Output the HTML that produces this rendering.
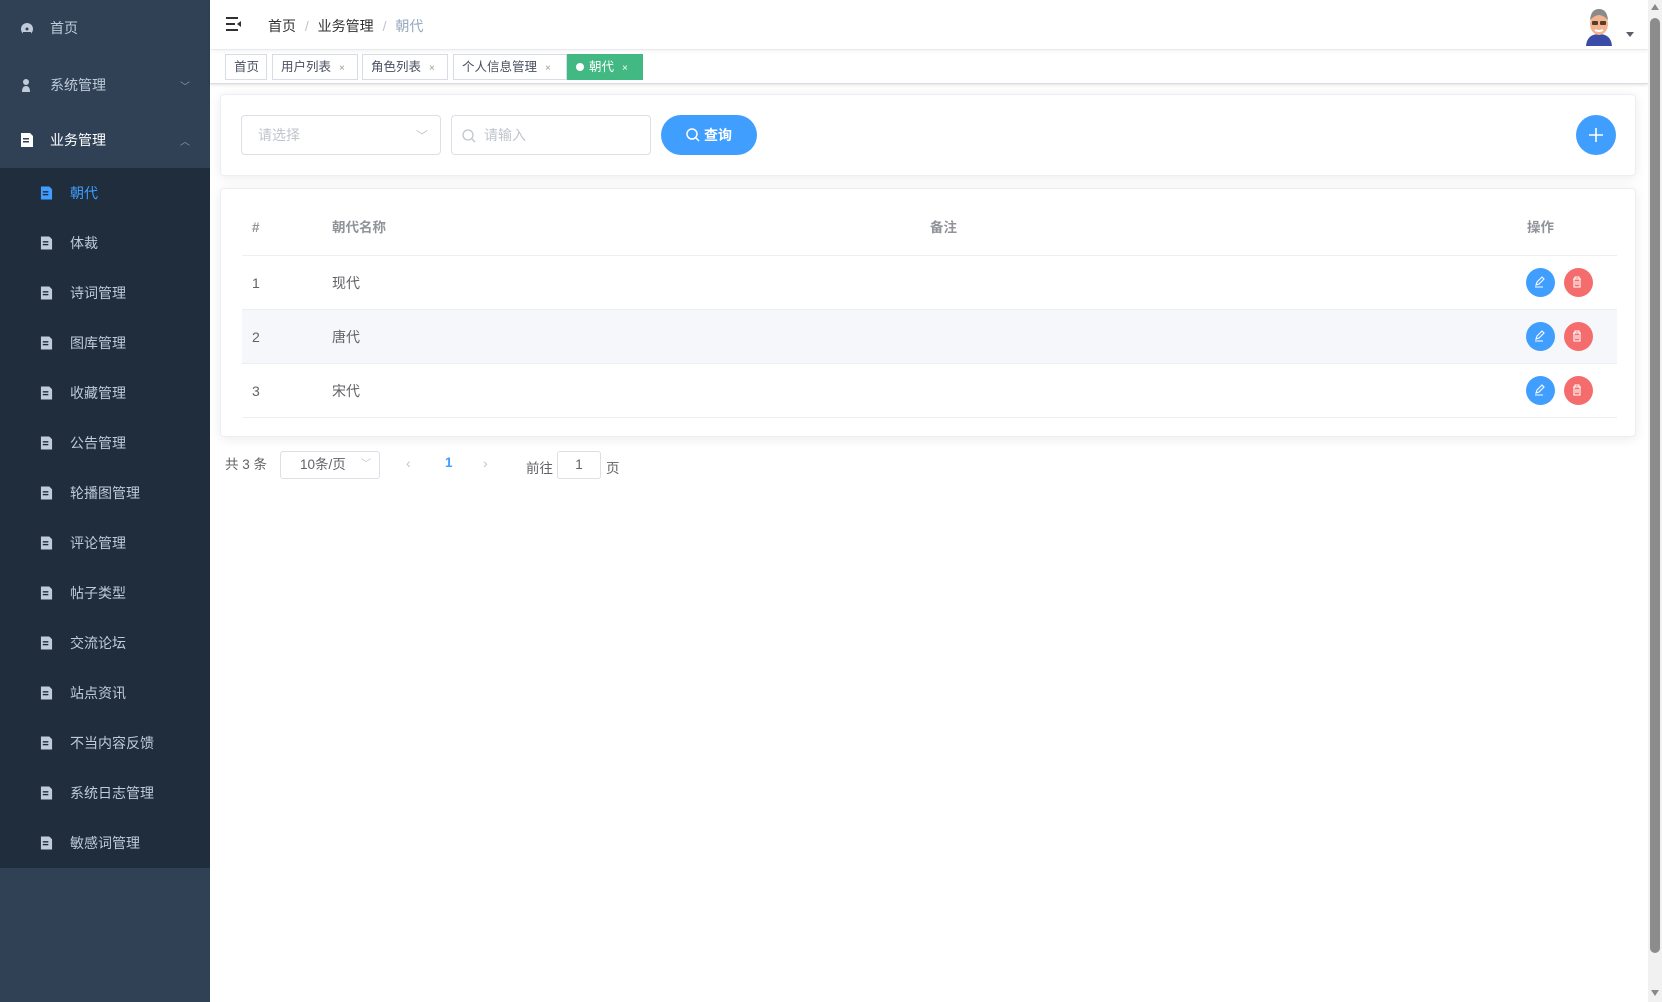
<!DOCTYPE html>
<html><head><meta charset="utf-8"><style>
*{box-sizing:border-box;margin:0;padding:0}
body{width:1662px;height:1002px;overflow:hidden;background:#fff;font-family:"Liberation Sans","Noto Sans CJK SC",sans-serif;position:relative;color:#606266}
.side{position:absolute;left:0;top:0;width:210px;height:1002px;background:#304156}
.mi{position:absolute;left:0;width:210px;height:56px;display:flex;align-items:center;color:#bfcbd9;font-size:14px}
.mi .ic{position:absolute;left:20px;width:14px;height:14px}
.mi span{position:absolute;left:50px}
.mi .ar{position:absolute;right:20px;font-size:10px;color:#909399;font-weight:normal}
.sub{position:absolute;left:0;top:168px;width:210px;height:700px;background:#1f2d3d}
.si{height:50px;display:flex;align-items:center;color:#bfcbd9;font-size:14px;position:relative}
.si .ic{position:absolute;left:40px;width:13px;height:14px}
.si span{position:absolute;left:70px}
.hdr{position:absolute;left:210px;top:0;right:14px;height:50px;border-bottom:1px solid #eef0f3;box-shadow:0 1px 4px rgba(0,21,41,.06)}
.tags{position:absolute;left:210px;top:50px;right:14px;height:34px;border-bottom:1px solid #d8dce5;box-shadow:0 1px 3px rgba(0,0,0,.12)}
.tag{position:absolute;top:4px;height:26px;border:1px solid #d8dce5;font-size:12.5px;color:#495060;line-height:24px;padding-left:8px;background:#fff}
.tag i{font-style:normal;font-size:10px;color:#999;margin-left:8px}
.card{position:absolute;left:220px;width:1416px;background:#fff;border:1px solid #ebeef5;border-radius:4px;box-shadow:0 2px 12px rgba(0,0,0,.08)}
.inp{position:absolute;height:40px;border:1px solid #dcdfe6;border-radius:4px;font-size:14px;color:#c0c4cc;line-height:38px}
.row{position:absolute;left:21px;width:1375px;height:54px;border-bottom:1px solid #ebeef5;font-size:14px;color:#606266}
.row div{position:absolute;top:0;line-height:54px}
.cb{position:absolute;top:12px;width:29px;height:29px;border-radius:50%}
</style></head><body>
<div class="side">
 <div class="mi" style="top:0"><svg class="ic" viewBox="0 0 14 14"><circle cx="7" cy="8" r="6" fill="#bfcbd9"/><rect x="3" y="11" width="8" height="3" fill="#304156"/><circle cx="7" cy="8" r="1.5" fill="#304156"/></svg><span>首页</span></div>
 <div class="mi" style="top:57px"><svg class="ic" viewBox="0 0 14 14"><circle cx="6" cy="4" r="3" fill="#bfcbd9"/><path d="M2 14 Q2 8 6 8 Q10 8 10 14Z" fill="#bfcbd9"/></svg><span>系统管理</span><b class="ar">﹀</b></div>
 <div class="mi" style="top:112px;color:#fff"><svg class="ic" viewBox="0 0 14 14"><path d="M1 0h9l3 3v11H1z" fill="#fff"/><rect x="3" y="5" width="6" height="1.5" fill="#304156"/><rect x="3" y="8" width="6" height="1.5" fill="#304156"/></svg><span>业务管理</span><b class="ar">︿</b></div>
 <div class="sub">
  <div class="si" style="color:#409eff"><svg class="ic" viewBox="0 0 14 14"><path d="M1 0h9l3 3v11H1z" fill="#409eff"/><rect x="3" y="5" width="6" height="1.5" fill="#1f2d3d"/><rect x="3" y="8" width="6" height="1.5" fill="#1f2d3d"/></svg><span>朝代</span></div>
  <div class="si"><svg class="ic" viewBox="0 0 14 14"><path d="M1 0h9l3 3v11H1z" fill="#bfcbd9"/><rect x="3" y="5" width="6" height="1.5" fill="#1f2d3d"/><rect x="3" y="8" width="6" height="1.5" fill="#1f2d3d"/></svg><span>体裁</span></div>
  <div class="si"><svg class="ic" viewBox="0 0 14 14"><path d="M1 0h9l3 3v11H1z" fill="#bfcbd9"/><rect x="3" y="5" width="6" height="1.5" fill="#1f2d3d"/><rect x="3" y="8" width="6" height="1.5" fill="#1f2d3d"/></svg><span>诗词管理</span></div>
  <div class="si"><svg class="ic" viewBox="0 0 14 14"><path d="M1 0h9l3 3v11H1z" fill="#bfcbd9"/><rect x="3" y="5" width="6" height="1.5" fill="#1f2d3d"/><rect x="3" y="8" width="6" height="1.5" fill="#1f2d3d"/></svg><span>图库管理</span></div>
  <div class="si"><svg class="ic" viewBox="0 0 14 14"><path d="M1 0h9l3 3v11H1z" fill="#bfcbd9"/><rect x="3" y="5" width="6" height="1.5" fill="#1f2d3d"/><rect x="3" y="8" width="6" height="1.5" fill="#1f2d3d"/></svg><span>收藏管理</span></div>
  <div class="si"><svg class="ic" viewBox="0 0 14 14"><path d="M1 0h9l3 3v11H1z" fill="#bfcbd9"/><rect x="3" y="5" width="6" height="1.5" fill="#1f2d3d"/><rect x="3" y="8" width="6" height="1.5" fill="#1f2d3d"/></svg><span>公告管理</span></div>
  <div class="si"><svg class="ic" viewBox="0 0 14 14"><path d="M1 0h9l3 3v11H1z" fill="#bfcbd9"/><rect x="3" y="5" width="6" height="1.5" fill="#1f2d3d"/><rect x="3" y="8" width="6" height="1.5" fill="#1f2d3d"/></svg><span>轮播图管理</span></div>
  <div class="si"><svg class="ic" viewBox="0 0 14 14"><path d="M1 0h9l3 3v11H1z" fill="#bfcbd9"/><rect x="3" y="5" width="6" height="1.5" fill="#1f2d3d"/><rect x="3" y="8" width="6" height="1.5" fill="#1f2d3d"/></svg><span>评论管理</span></div>
  <div class="si"><svg class="ic" viewBox="0 0 14 14"><path d="M1 0h9l3 3v11H1z" fill="#bfcbd9"/><rect x="3" y="5" width="6" height="1.5" fill="#1f2d3d"/><rect x="3" y="8" width="6" height="1.5" fill="#1f2d3d"/></svg><span>帖子类型</span></div>
  <div class="si"><svg class="ic" viewBox="0 0 14 14"><path d="M1 0h9l3 3v11H1z" fill="#bfcbd9"/><rect x="3" y="5" width="6" height="1.5" fill="#1f2d3d"/><rect x="3" y="8" width="6" height="1.5" fill="#1f2d3d"/></svg><span>交流论坛</span></div>
  <div class="si"><svg class="ic" viewBox="0 0 14 14"><path d="M1 0h9l3 3v11H1z" fill="#bfcbd9"/><rect x="3" y="5" width="6" height="1.5" fill="#1f2d3d"/><rect x="3" y="8" width="6" height="1.5" fill="#1f2d3d"/></svg><span>站点资讯</span></div>
  <div class="si"><svg class="ic" viewBox="0 0 14 14"><path d="M1 0h9l3 3v11H1z" fill="#bfcbd9"/><rect x="3" y="5" width="6" height="1.5" fill="#1f2d3d"/><rect x="3" y="8" width="6" height="1.5" fill="#1f2d3d"/></svg><span>不当内容反馈</span></div>
  <div class="si"><svg class="ic" viewBox="0 0 14 14"><path d="M1 0h9l3 3v11H1z" fill="#bfcbd9"/><rect x="3" y="5" width="6" height="1.5" fill="#1f2d3d"/><rect x="3" y="8" width="6" height="1.5" fill="#1f2d3d"/></svg><span>系统日志管理</span></div>
  <div class="si"><svg class="ic" viewBox="0 0 14 14"><path d="M1 0h9l3 3v11H1z" fill="#bfcbd9"/><rect x="3" y="5" width="6" height="1.5" fill="#1f2d3d"/><rect x="3" y="8" width="6" height="1.5" fill="#1f2d3d"/></svg><span>敏感词管理</span></div>
 </div>
</div>

<div class="hdr">
 <svg style="position:absolute;left:16px;top:17px" width="16" height="14" viewBox="0 0 16 14"><rect x="0" y="0" width="12" height="2" fill="#303133"/><rect x="0" y="6" width="9" height="2" fill="#303133"/><rect x="0" y="12" width="12" height="2" fill="#303133"/><path d="M15 4 L11 7 L15 10Z" fill="#303133"/></svg>
 <div style="position:absolute;left:58px;top:16px;font-size:14px;color:#303133">首页 <span style="color:#c0c4cc;margin:0 5px">/</span> 业务管理 <span style="color:#c0c4cc;margin:0 5px">/</span> <span style="color:#97a8be">朝代</span></div>
 <svg style="position:absolute;left:1373px;top:6px" width="32" height="40" viewBox="0 0 32 40"><path d="M3 40 Q4 28 16 28 Q28 28 29 40Z" fill="#3b4ba8"/><ellipse cx="16" cy="18" rx="9" ry="11" fill="#f2b48f"/><path d="M7 14 Q8 3 16 3 Q24 3 25 14 Q20 9 16 9 Q12 9 7 14Z" fill="#8a8a8a"/><rect x="9" y="15" width="6" height="4" rx="1" fill="#5a3a2a"/><rect x="17" y="15" width="6" height="4" rx="1" fill="#5a3a2a"/><path d="M12 24 Q16 26 20 24" stroke="#fff" stroke-width="2" fill="none"/></svg>
 <div style="position:absolute;left:1416px;top:32px;width:0;height:0;border-left:4px solid transparent;border-right:4px solid transparent;border-top:5px solid #5a5e66"></div>
</div>

<div class="tags">
 <div class="tag" style="left:15px;width:42px">首页</div>
 <div class="tag" style="left:62px;width:86px">用户列表<i>×</i></div>
 <div class="tag" style="left:152px;width:86px">角色列表<i>×</i></div>
 <div class="tag" style="left:243px;width:114px">个人信息管理<i>×</i></div>
 <div class="tag" style="left:357px;width:76px;background:#42b983;border-color:#42b983;color:#fff"><span style="display:inline-block;width:8px;height:8px;border-radius:50%;background:#fff;margin-right:5px;vertical-align:0"></span>朝代<i style="color:#fff">×</i></div>
</div>

<div class="card" style="top:94px;height:82px">
 <div class="inp" style="left:20px;top:20px;width:200px;padding-left:16px">请选择<span style="position:absolute;right:12px;top:1px;color:#c0c4cc;font-size:12px">﹀</span></div>
 <div class="inp" style="left:230px;top:20px;width:200px;padding-left:32px"><svg style="position:absolute;left:10px;top:13px" width="14" height="14" viewBox="0 0 14 14"><circle cx="6" cy="6" r="5" stroke="#c0c4cc" stroke-width="1.3" fill="none"/><path d="M10 10l3 3" stroke="#c0c4cc" stroke-width="1.3"/></svg>请输入</div>
 <div style="position:absolute;left:440px;top:20px;width:96px;height:40px;border-radius:20px;background:#409eff;color:#fff;font-size:14px;font-weight:bold;line-height:40px;text-align:center"><svg style="vertical-align:-2px;margin-right:4px" width="14" height="14" viewBox="0 0 14 14"><circle cx="6" cy="6" r="5" stroke="#fff" stroke-width="1.5" fill="none"/><path d="M10 10l3 3" stroke="#fff" stroke-width="1.5"/></svg>查询</div>
 <div style="position:absolute;left:1355px;top:20px;width:40px;height:40px;border-radius:50%;background:#409eff"><svg width="40" height="40" viewBox="0 0 40 40"><path d="M20 13v14M13 20h14" stroke="#fff" stroke-width="1.6"/></svg></div>
</div>

<div class="card" style="top:188px;height:249px">
 <div class="row" style="top:12px;height:55px;font-weight:bold;color:#909399;font-size:13.5px"><div style="left:10px">#</div><div style="left:90px">朝代名称</div><div style="left:688px">备注</div><div style="left:1285px">操作</div></div>
 <div class="row" style="top:67px"><div style="left:10px">1</div><div style="left:90px">现代</div><span class="cb" style="left:1284px;background:#409eff"></span><span class="cb" style="left:1322px;background:#f56c6c"></span></div>
 <div class="row" style="top:121px;background:#f5f7fa"><div style="left:10px">2</div><div style="left:90px">唐代</div><span class="cb" style="left:1284px;background:#409eff"></span><span class="cb" style="left:1322px;background:#f56c6c"></span></div>
 <div class="row" style="top:175px"><div style="left:10px">3</div><div style="left:90px">宋代</div><span class="cb" style="left:1284px;background:#409eff"></span><span class="cb" style="left:1322px;background:#f56c6c"></span></div>
</div>

<div style="position:absolute;left:0;top:0;width:0;height:0">
 <svg style="position:absolute;left:1532px;top:275px" width="14" height="14" viewBox="0 0 14 14"><path d="M4 10l1-3 5-5 2 2-5 5z M3 12h8" stroke="#fff" stroke-width="1.1" fill="none"/></svg>
 <svg style="position:absolute;left:1570px;top:275px" width="14" height="14" viewBox="0 0 14 14"><path d="M3 4h8M5 4V2h4v2M4 4v8h6V4M6 6v4M8 6v4" stroke="#fff" stroke-width="1.1" fill="none"/></svg>
 <svg style="position:absolute;left:1532px;top:329px" width="14" height="14" viewBox="0 0 14 14"><path d="M4 10l1-3 5-5 2 2-5 5z M3 12h8" stroke="#fff" stroke-width="1.1" fill="none"/></svg>
 <svg style="position:absolute;left:1570px;top:329px" width="14" height="14" viewBox="0 0 14 14"><path d="M3 4h8M5 4V2h4v2M4 4v8h6V4M6 6v4M8 6v4" stroke="#fff" stroke-width="1.1" fill="none"/></svg>
 <svg style="position:absolute;left:1532px;top:383px" width="14" height="14" viewBox="0 0 14 14"><path d="M4 10l1-3 5-5 2 2-5 5z M3 12h8" stroke="#fff" stroke-width="1.1" fill="none"/></svg>
 <svg style="position:absolute;left:1570px;top:383px" width="14" height="14" viewBox="0 0 14 14"><path d="M3 4h8M5 4V2h4v2M4 4v8h6V4M6 6v4M8 6v4" stroke="#fff" stroke-width="1.1" fill="none"/></svg>
</div>

<div style="position:absolute;left:225px;top:456px;font-size:13.5px;color:#606266;line-height:18px">共 3 条</div>
<div style="position:absolute;left:280px;top:451px;width:100px;height:28px;border:1px solid #dcdfe6;border-radius:3px;font-size:13.5px;line-height:26px;padding-left:19px;color:#606266">10条/页<span style="position:absolute;right:8px;color:#c0c4cc;font-size:10px">﹀</span></div>
<div style="position:absolute;left:406px;top:455px;font-size:14px;color:#c0c4cc">‹</div>
<div style="position:absolute;left:445px;top:455px;font-size:13.5px;color:#409eff;font-weight:bold">1</div>
<div style="position:absolute;left:483px;top:455px;font-size:14px;color:#c0c4cc">›</div>
<div style="position:absolute;left:526px;top:457px;font-size:13.5px">前往</div>
<div style="position:absolute;left:557px;top:451px;width:44px;height:28px;border:1px solid #dcdfe6;border-radius:3px;text-align:center;line-height:26px;font-size:13.5px">1</div>
<div style="position:absolute;left:606px;top:457px;font-size:13.5px">页</div>

<div style="position:absolute;right:0;top:0;width:14px;height:1002px;background:#f1f1f1"></div>
<div style="position:absolute;right:2px;top:18px;width:10px;height:935px;background:#8c8c8c;border-radius:5px"></div>
<div style="position:absolute;right:3px;top:4px;width:0;height:0;border-left:4px solid transparent;border-right:4px solid transparent;border-bottom:6px solid #888"></div>
<div style="position:absolute;right:3px;top:990px;width:0;height:0;border-left:4px solid transparent;border-right:4px solid transparent;border-top:6px solid #888"></div>
</body></html>
